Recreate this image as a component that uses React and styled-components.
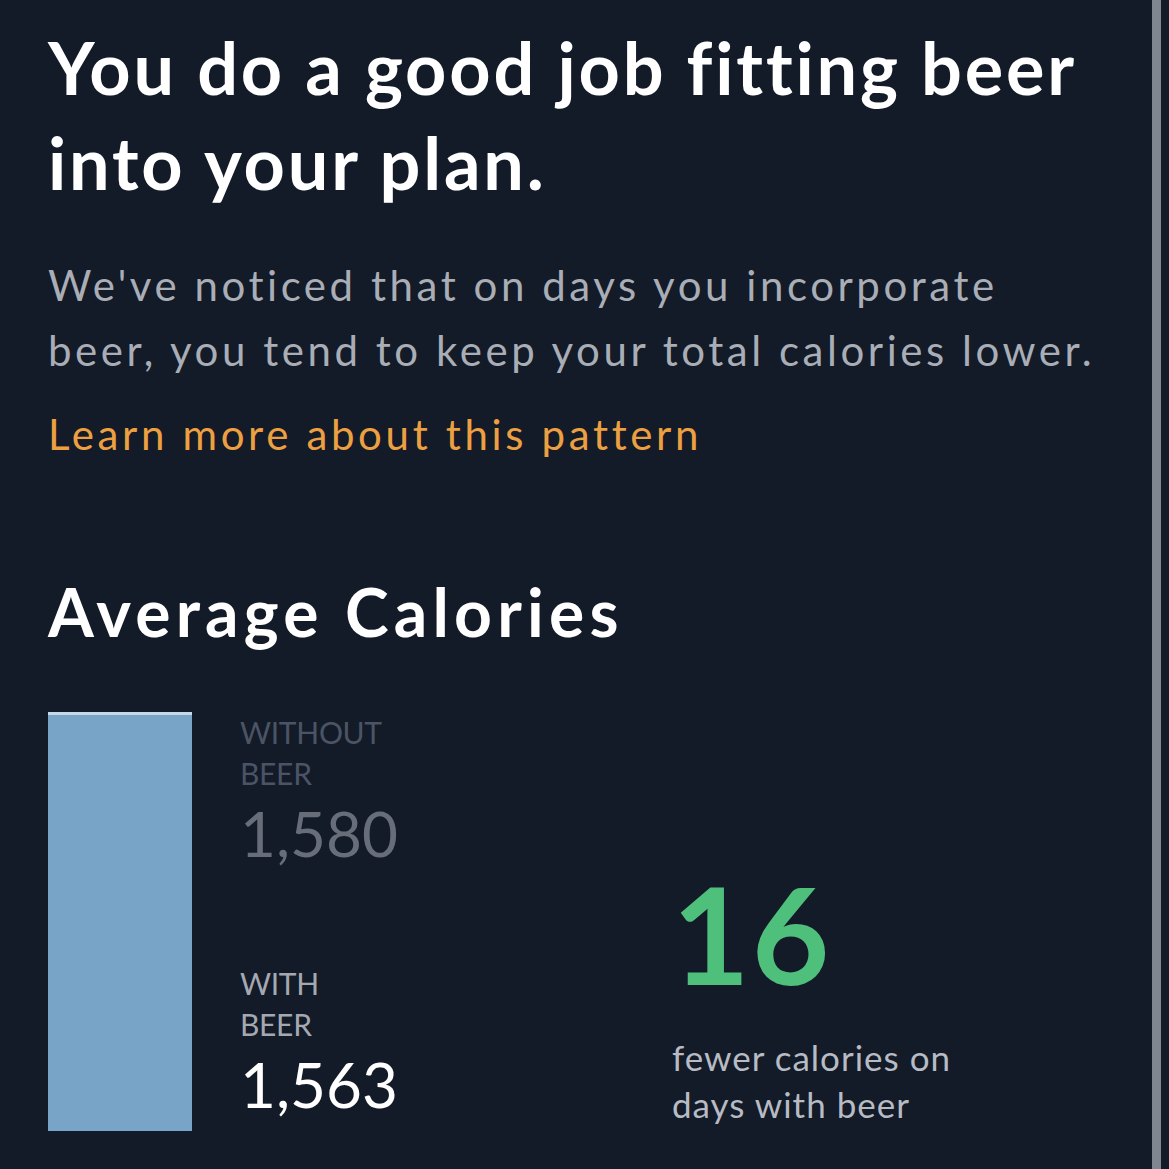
import React from "react";
import styled, { createGlobalStyle } from "styled-components";

const GlobalStyle = createGlobalStyle`
  html, body {
    margin: 0;
    padding: 0;
    background: #131a28;
  }
  body {
    font-family: Lato, "Open Sans", sans-serif;
    -webkit-font-smoothing: antialiased;
  }
`;

const Screen = styled.div`
  width: 1169px;
  height: 1169px;
  display: flex;
  background: #131a28;
  overflow: hidden;
`;

const Content = styled.main`
  flex: 1;
  padding: 20px 0 0 48px;
`;

const ScrollTrack = styled.div`
  width: 9px;
  margin-right: 8px;
  background: #80868f;
`;

const Title = styled.h1`
  margin: 0;
  color: #ffffff;
  font-size: 72px;
  font-weight: 700;
  line-height: 95px;
  letter-spacing: 2.8px;
`;

const Body = styled.p`
  margin: 43px 0 0;
  color: #a9adb5;
  font-size: 42px;
  line-height: 65px;
  letter-spacing: 3.55px;
`;

const LearnLink = styled.a`
  display: block;
  margin-top: 19px;
  color: #eda041;
  font-size: 42px;
  line-height: 65px;
  letter-spacing: 3.65px;
  text-decoration: none;
`;

const SectionTitle = styled.h2`
  margin: 105px 0 0;
  color: #ffffff;
  font-size: 66px;
  font-weight: 700;
  line-height: 80px;
  letter-spacing: 5.2px;
`;

const Chart = styled.section`
  display: flex;
  margin-top: 60px;
  height: 419px;
`;

const Bar = styled.div`
  width: 144px;
  background: #78a4c7;
  border-top: 3px solid #c7d9e8;
`;

const Values = styled.div`
  display: flex;
  flex-direction: column;
  justify-content: space-between;
  width: 432px;
  margin-left: 48px;
  padding: 0 0 11px;
`;

const ValueGroup = styled.div`
  display: flex;
  flex-direction: column;
`;

const ValueLabel = styled.span`
  color: ${(p) => (p.$muted ? "#4b5464" : "#a4a9b1")};
  font-size: 30px;
  line-height: 41px;
  text-transform: uppercase;
  letter-spacing: -0.3px;
`;

const ValueNumber = styled.span`
  color: ${(p) => (p.$muted ? "#676e79" : "#ffffff")};
  font-size: 62px;
  line-height: 72px;
  margin-top: 3px;
`;

const Difference = styled.div`
  display: flex;
  flex-direction: column;
  justify-content: flex-end;
  padding-bottom: 3px;
`;

const DiffNumber = styled.span`
  color: #4fbf7c;
  font-size: 134px;
  font-weight: 700;
  line-height: 130px;
  letter-spacing: 2px;
`;

const DiffCaption = styled.span`
  margin-top: 35px;
  color: #b7bbc3;
  font-size: 35px;
  line-height: 47px;
  letter-spacing: 1px;
`;

export default function App() {
  return (
    <>
      <GlobalStyle />
      <Screen>
        <Content>
          <Title>
            You do a good job fitting beer
            <br />
            into your plan.
          </Title>
          <Body>
            We've noticed that on days you incorporate
            <br />
            beer, you tend to keep your total calories lower.
          </Body>
          <LearnLink href="#">Learn more about this pattern</LearnLink>
          <SectionTitle>Average Calories</SectionTitle>
          <Chart>
            <Bar />
            <Values>
              <ValueGroup>
                <ValueLabel $muted>Without<br />Beer</ValueLabel>
                <ValueNumber $muted>1,580</ValueNumber>
              </ValueGroup>
              <ValueGroup>
                <ValueLabel>With<br />Beer</ValueLabel>
                <ValueNumber>1,563</ValueNumber>
              </ValueGroup>
            </Values>
            <Difference>
              <DiffNumber>16</DiffNumber>
              <DiffCaption>
                fewer calories on
                <br />
                days with beer
              </DiffCaption>
            </Difference>
          </Chart>
        </Content>
        <ScrollTrack />
      </Screen>
    </>
  );
}
